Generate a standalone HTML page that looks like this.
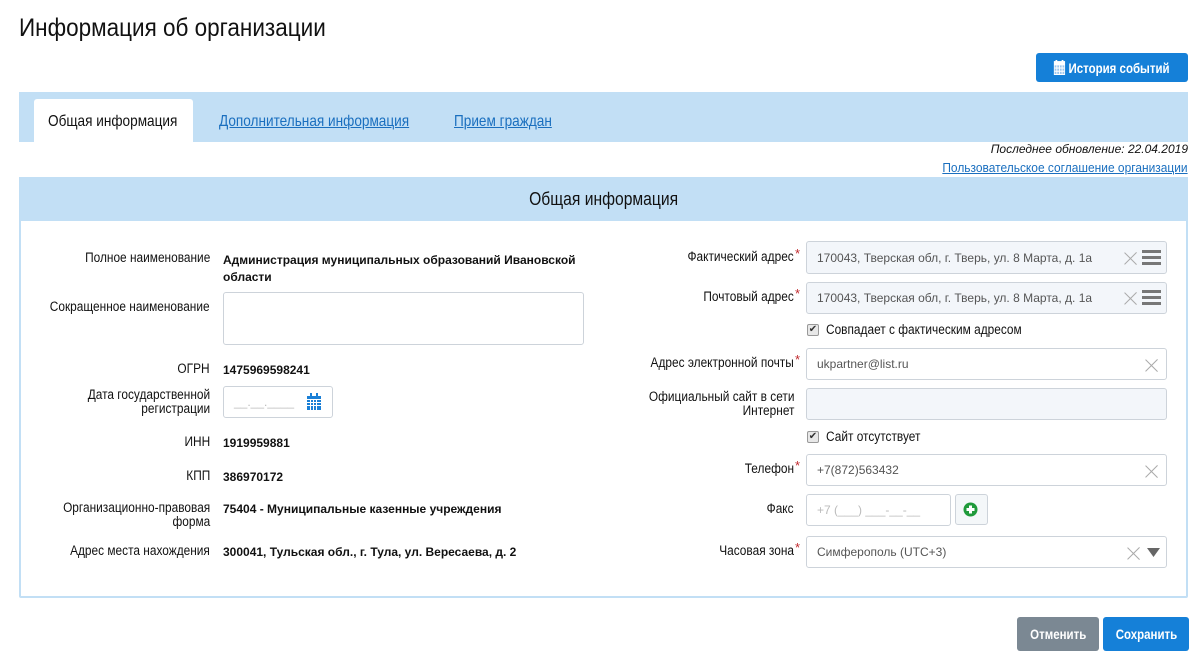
<!DOCTYPE html>
<html><head><meta charset="utf-8"><style>
*{box-sizing:border-box;margin:0;padding:0}
body{width:1204px;height:668px;background:#fff;position:relative;font-family:"Liberation Sans",sans-serif;color:#111;overflow:hidden}
.a{position:absolute;white-space:nowrap}
.c{display:inline-block;transform-origin:left center}
.r .c,.lbl .c{transform-origin:right center}
.n{font-size:13.5px}
.lbl{text-align:right;font-size:13.5px;line-height:14px}
.lbl .c{transform:scaleX(.88)}
.n .c{transform:scaleX(.88)}
.val{font-weight:bold;font-size:12px}
.inp{position:absolute;border:1px solid #cdd3da;border-radius:3px;background:#fff;font-size:12px;color:#555;padding-left:10px;display:flex;align-items:center}
.g{background:#f3f6fa}
.ast{color:#c0282d;font-size:13px;position:absolute}
.x{position:absolute;width:14px;height:14px}
.x:before,.x:after{content:"";position:absolute;left:6px;top:-1px;width:1.3px;height:17px;background:#aaa;transform:rotate(45deg)}
.x:after{transform:rotate(-45deg)}
.hb{position:absolute;width:19px;height:15px;border-top:3px solid #777;border-bottom:3px solid #777}
.hb:after{content:"";position:absolute;left:0;right:0;top:3px;height:3px;background:#777}
.cb{position:absolute;width:12px;height:12px;border:1px solid #999;border-radius:2px;background:#e8e8e8;font-size:10px;line-height:10px;text-align:center;color:#333}
.btn{position:absolute;color:#fff;font-size:14px;font-weight:bold;display:flex;align-items:center;justify-content:center;border-radius:3px;white-space:nowrap}
.btn .c{transform:scaleX(.82);transform-origin:center}
a{color:#1a6fbf;text-decoration:underline}
</style></head><body>
<div class="a" style="left:19px;top:14px;font-size:25px;color:#111"><span class="c" style="transform:scaleX(.9)">Информация об организации</span></div>
<div class="btn" style="left:1036px;top:53px;width:152px;height:29px;background:#1580d8"><span class="c" style="display:flex;align-items:center">
<svg width="14" height="15" viewBox="0 0 13 14" style="margin-right:4px"><rect x="0" y="1" width="13" height="13" fill="#fff"/><rect x="1" y="5" width="11" height="8" fill="#9cc6ee"/><g fill="#fff"><rect x="3" y="5" width="1" height="8"/><rect x="6" y="5" width="1" height="8"/><rect x="9" y="5" width="1" height="8"/><rect x="1" y="7" width="11" height="1"/><rect x="1" y="10" width="11" height="1"/></g><rect x="2" y="0" width="2" height="3" fill="#fff"/><rect x="9" y="0" width="2" height="3" fill="#fff"/></svg>История событий</span></div>
<div class="a" style="left:19px;top:92px;width:1169px;height:50px;background:#c2dff5"></div>
<div class="a" style="left:34px;top:99px;width:159px;height:43px;background:#fff;border-radius:3px 3px 0 0"></div>
<div class="a" style="left:48px;top:113px;font-size:16px"><span class="c" style="transform:scaleX(.85)">Общая информация</span></div>
<div class="a" style="left:219px;top:113px;font-size:16px"><span class="c" style="transform:scaleX(.85)"><a>Дополнительная информация</a></span></div>
<div class="a" style="left:454px;top:113px;font-size:16px"><span class="c" style="transform:scaleX(.85)"><a>Прием граждан</a></span></div>
<div class="a" style="right:16px;top:142px;font-style:italic;font-size:12px">Последнее обновление: 22.04.2019</div>
<div class="a r" style="right:16px;top:160px;font-size:13px"><span class="c" style="transform:scaleX(.92)"><a>Пользовательское соглашение организации</a></span></div>
<div class="a" style="left:19px;top:177px;width:1169px;height:421px;border:2px solid #c2dff5;border-radius:2px"></div>
<div class="a" style="left:19px;top:177px;width:1169px;height:44px;background:#c2dff5;text-align:center;line-height:44px;font-size:18px"><span class="c" style="transform:scaleX(.87);transform-origin:center">Общая информация</span></div>

<div class="a lbl" style="right:994px;top:251px"><span class="c">Полное наименование</span></div>
<div class="a val" style="left:223px;top:252px;line-height:17px;white-space:normal;width:370px">Администрация муниципальных образований Ивановской области</div>
<div class="a lbl" style="right:994px;top:300px"><span class="c">Сокращенное наименование</span></div>
<div class="inp" style="left:223px;top:292px;width:361px;height:53px"></div>
<div class="a lbl" style="right:994px;top:362px"><span class="c">ОГРН</span></div>
<div class="a val" style="left:223px;top:363px">1475969598241</div>
<div class="a lbl" style="right:994px;top:388px"><span class="c">Дата государственной<br>регистрации</span></div>
<div class="inp" style="left:223px;top:386px;width:110px;height:32px;color:#bbb">__.__.____</div>
<svg class="a" style="left:307px;top:393px" width="14" height="17" viewBox="0 0 14 17"><rect x="0" y="3" width="14" height="14" fill="#1a7fd6"/><rect x="3" y="0" width="2" height="4" fill="#1a7fd6"/><rect x="9" y="0" width="2" height="4" fill="#1a7fd6"/><g fill="#fff"><rect x="0" y="6" width="14" height="1"/><rect x="0" y="9" width="14" height="1"/><rect x="0" y="12" width="14" height="1"/><rect x="3" y="6" width="1" height="11"/><rect x="6" y="6" width="1" height="11"/><rect x="9" y="6" width="1" height="11"/></g></svg>
<div class="a lbl" style="right:994px;top:435px"><span class="c">ИНН</span></div>
<div class="a val" style="left:223px;top:436px">1919959881</div>
<div class="a lbl" style="right:994px;top:469px"><span class="c">КПП</span></div>
<div class="a val" style="left:223px;top:470px">386970172</div>
<div class="a lbl" style="right:994px;top:501px"><span class="c">Организационно-правовая<br>форма</span></div>
<div class="a val" style="left:223px;top:502px">75404 - Муниципальные казенные учреждения</div>
<div class="a lbl" style="right:994px;top:544px"><span class="c">Адрес места нахождения</span></div>
<div class="a val" style="left:223px;top:545px">300041, Тульская обл., г. Тула, ул. Вересаева, д. 2</div>

<div class="a lbl" style="right:410px;top:250px"><span class="c">Фактический адрес</span></div><span class="ast" style="left:795px;top:246px">*</span>
<div class="inp g" style="left:806px;top:241px;width:361px;height:33px">170043, Тверская обл, г. Тверь, ул. 8 Марта, д. 1а</div>
<div class="x" style="left:1124px;top:251px"></div><div class="hb" style="left:1142px;top:250px"></div>
<div class="a lbl" style="right:410px;top:290px"><span class="c">Почтовый адрес</span></div><span class="ast" style="left:795px;top:286px">*</span>
<div class="inp g" style="left:806px;top:282px;width:361px;height:32px">170043, Тверская обл, г. Тверь, ул. 8 Марта, д. 1а</div>
<div class="x" style="left:1124px;top:291px"></div><div class="hb" style="left:1142px;top:290px"></div>
<div class="cb" style="left:807px;top:324px">✔</div><div class="a n" style="left:826px;top:322px"><span class="c">Совпадает с фактическим адресом</span></div>
<div class="a lbl" style="right:410px;top:356px"><span class="c">Адрес электронной почты</span></div><span class="ast" style="left:795px;top:352px">*</span>
<div class="inp" style="left:806px;top:348px;width:361px;height:32px">ukpartner@list.ru</div>
<div class="x" style="left:1145px;top:358px"></div>
<div class="a lbl" style="right:410px;top:390px"><span class="c">Официальный сайт в сети<br>Интернет</span></div>
<div class="inp g" style="left:806px;top:388px;width:361px;height:32px"></div>
<div class="cb" style="left:807px;top:431px">✔</div><div class="a n" style="left:826px;top:429px"><span class="c">Сайт отсутствует</span></div>
<div class="a lbl" style="right:410px;top:462px"><span class="c">Телефон</span></div><span class="ast" style="left:795px;top:458px">*</span>
<div class="inp" style="left:806px;top:454px;width:361px;height:32px">+7(872)563432</div>
<div class="x" style="left:1145px;top:464px"></div>
<div class="a lbl" style="right:410px;top:502px"><span class="c">Факс</span></div>
<div class="inp" style="left:806px;top:494px;width:145px;height:32px;color:#bbb">+7 (___) ___-__-__</div>
<div class="a" style="left:955px;top:494px;width:33px;height:31px;border:1px solid #cdd3da;border-radius:3px;background:#f4f7f9"></div>
<svg class="a" style="left:963px;top:502px" width="15" height="15" viewBox="0 0 15 15"><circle cx="7.5" cy="7.5" r="7" fill="#1f9a3a"/><rect x="6" y="3.5" width="3" height="8" fill="#fff"/><rect x="3.5" y="6" width="8" height="3" fill="#fff"/></svg>
<div class="a lbl" style="right:410px;top:544px"><span class="c">Часовая зона</span></div><span class="ast" style="left:795px;top:540px">*</span>
<div class="inp" style="left:806px;top:536px;width:361px;height:32px">Симферополь (UTC+3)</div>
<div class="x" style="left:1127px;top:546px"></div>
<svg class="a" style="left:1147px;top:548px" width="13" height="9"><path d="M0 0H13L6.5 9Z" fill="#666"/></svg>

<div class="btn" style="left:1017px;top:617px;width:82px;height:34px;background:#7b8893"><span class="c">Отменить</span></div>
<div class="btn" style="left:1103px;top:617px;width:86px;height:34px;background:#1580d8"><span class="c">Сохранить</span></div>
</body></html>
